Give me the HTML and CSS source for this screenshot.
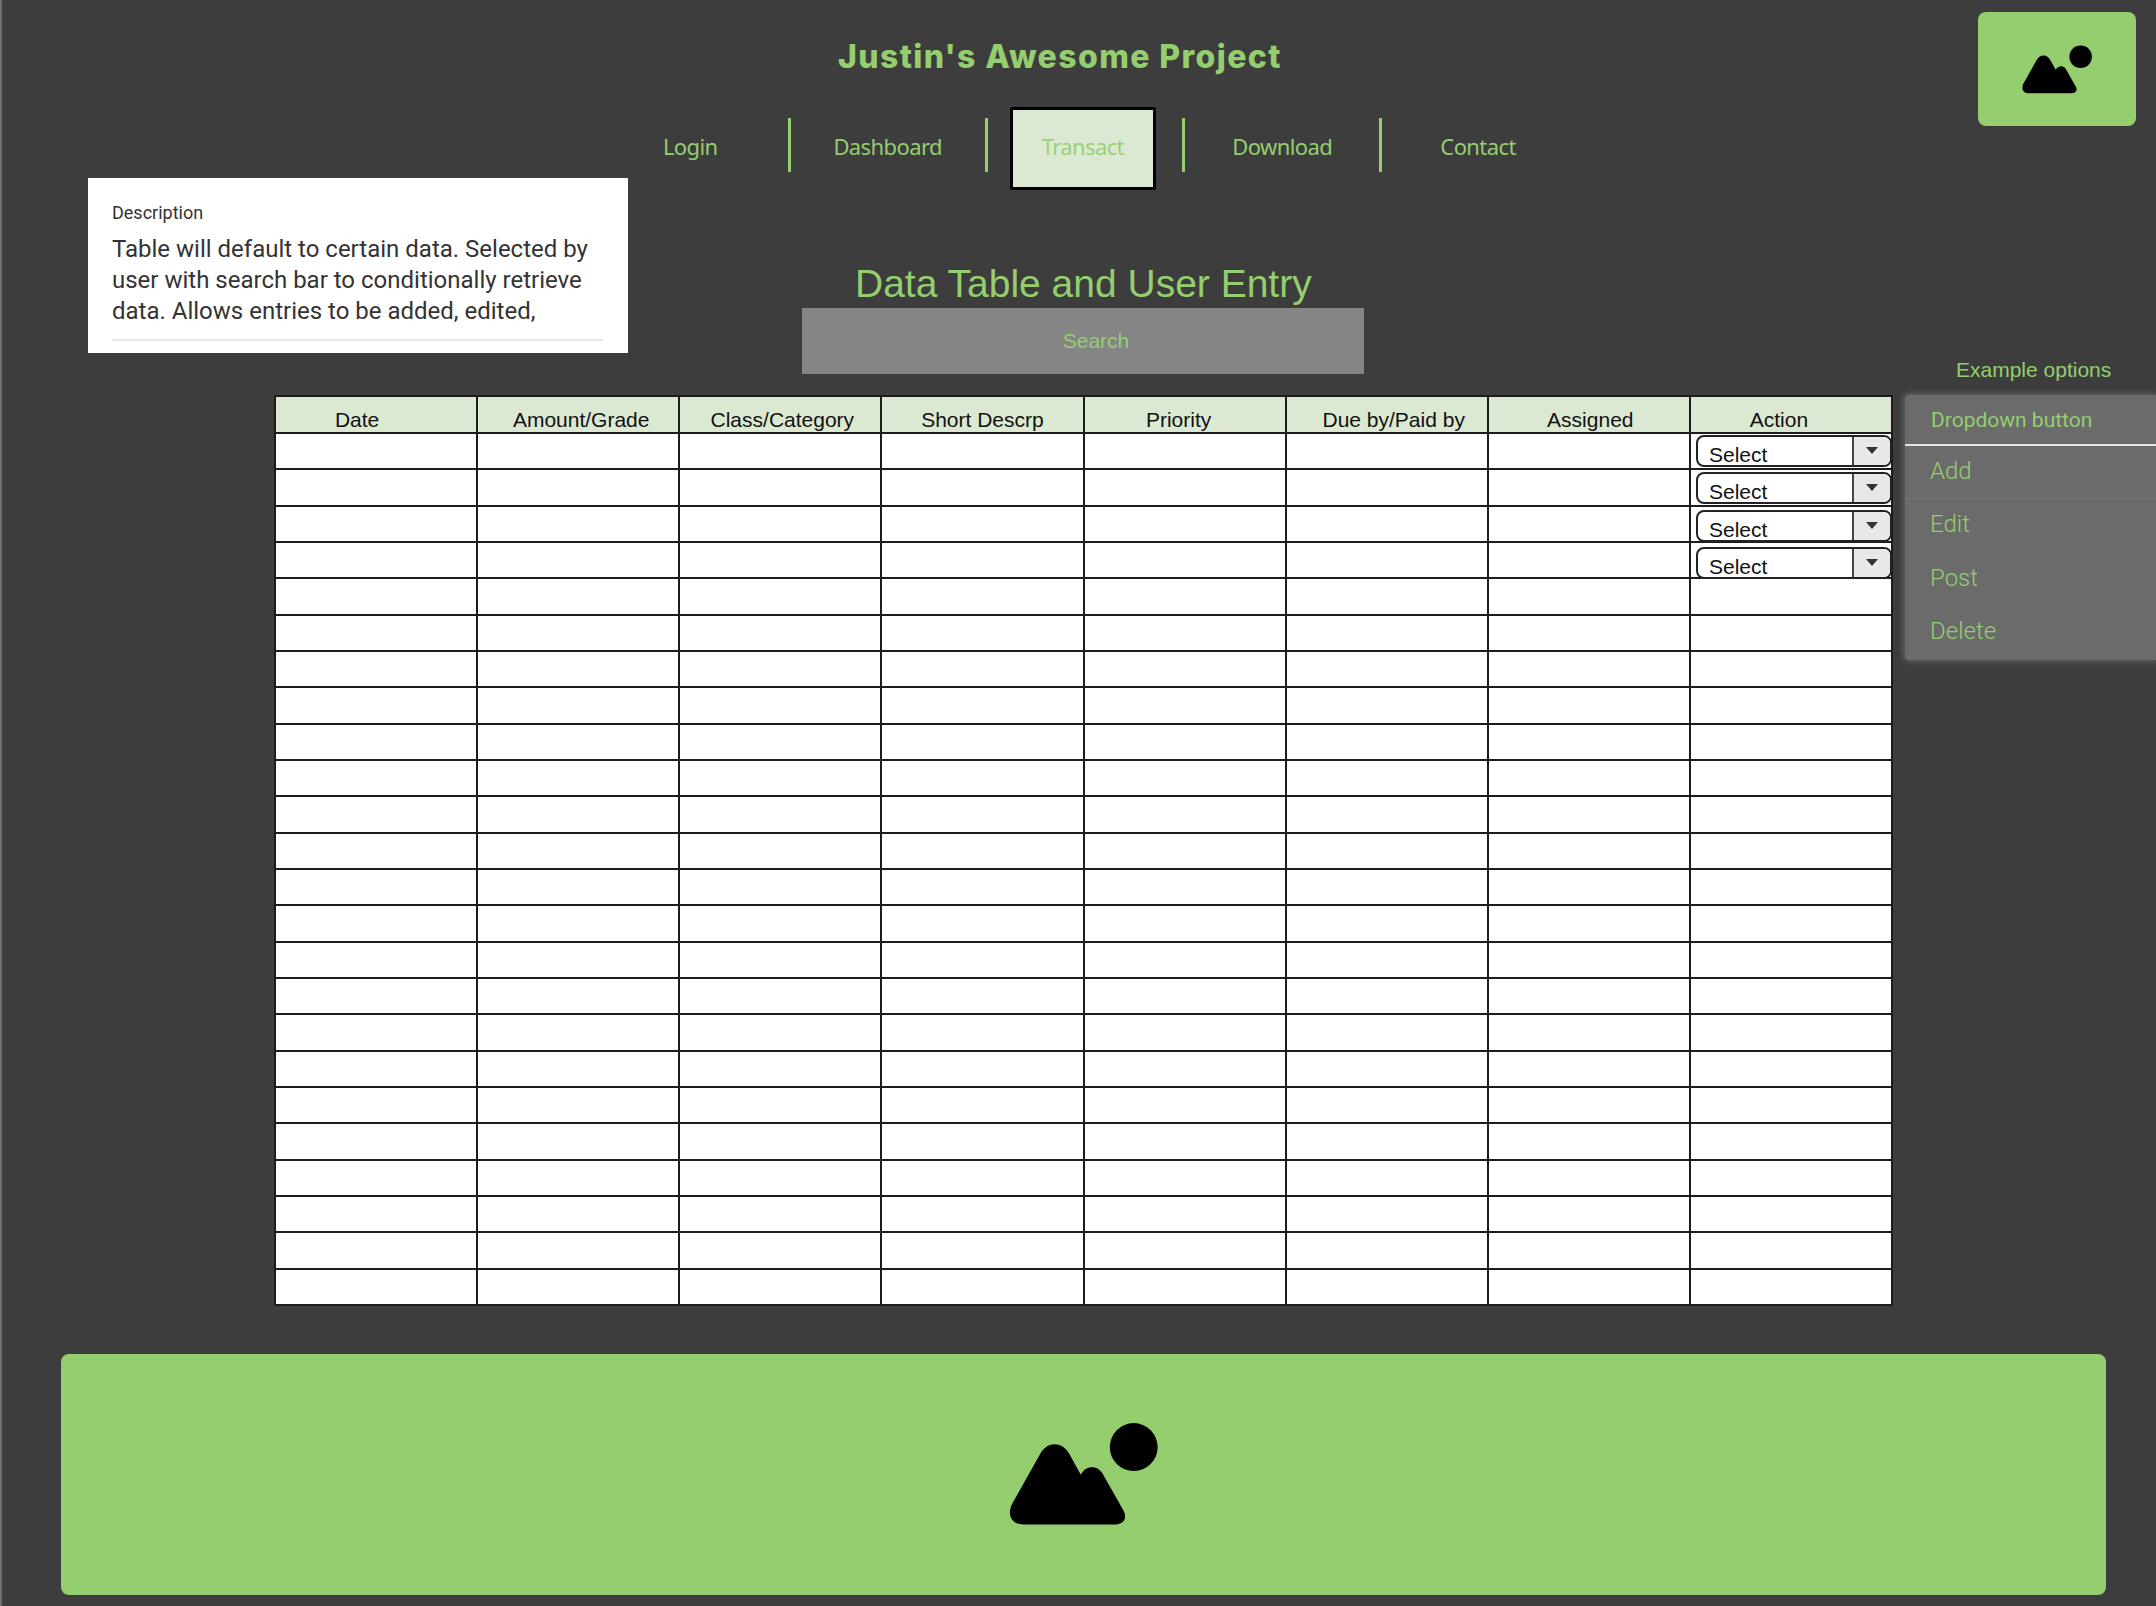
FILE: index.html

```html
<!DOCTYPE html>
<html lang="en">
<head>
    <meta charset="UTF-8">
    <title>Justin's Awesome Project</title>
    <link rel="stylesheet" href="styles.css">
</head>
<body>
    <svg class="defs" width="0" height="0">
        <symbol id="picture" viewBox="140 60 460 312">
            <path d="M190 368C155 368 138 340 156 305L240 155C262 117 305 117 327 155L362 218C372 200 385 196 396 196C410 196 420 203 428 216L488 322C505 350 490 368 462 368Z"/>
            <circle cx="521" cy="135" r="72"/>
        </symbol>
    </svg>

    <div class="top">
        <div class="side">
            <div class="card">
                <div class="card-label">Description</div>
                <p class="card-text">Table will default to certain data. Selected by user with search bar to conditionally retrieve data. Allows entries to be added, edited,</p>
                <div class="card-rule"></div>
            </div>
        </div>

        <div class="center">
            <h1 class="title">Justin's Awesome Project</h1>
            <nav class="nav">
                <a class="nav-item nav-first">Login</a>
                <a class="nav-item">Dashboard</a>
                <div class="nav-item nav-cell"><a class="nav-active">Transact</a></div>
                <a class="nav-item">Download</a>
                <a class="nav-item nav-last">Contact</a>
            </nav>
            <h2 class="heading">Data Table and User Entry</h2>
            <div class="search">Search</div>
        </div>

        <div class="right">
            <div class="logo"><svg class="logo-icon"><use href="#picture"/></svg></div>
            <div class="options-label">Example options</div>
        </div>
    </div>

    <div class="work">
        <div class="table-wrap">
            <table class="grid">
                <thead>
                    <tr>
                        <th>Date</th>
                        <th>Amount/Grade</th>
                        <th>Class/Category</th>
                        <th>Short Descrp</th>
                        <th>Priority</th>
                        <th>Due by/Paid by</th>
                        <th>Assigned</th>
                        <th>Action</th>
                    </tr>
                </thead>
                <tbody id="rows"></tbody>
            </table>
            <div class="selects">
                <div class="select"><span class="select-text">Select</span><span class="select-arrow"></span></div>
                <div class="select"><span class="select-text">Select</span><span class="select-arrow"></span></div>
                <div class="select"><span class="select-text">Select</span><span class="select-arrow"></span></div>
                <div class="select"><span class="select-text">Select</span><span class="select-arrow"></span></div>
            </div>
        </div>

        <div class="menu">
            <div class="menu-head">Dropdown button</div>
            <a class="menu-item menu-hover">Add</a>
            <a class="menu-item">Edit</a>
            <a class="menu-item">Post</a>
            <a class="menu-item">Delete</a>
        </div>
    </div>

    <div class="footer"><svg class="footer-icon"><use href="#picture"/></svg></div>

    <script>
        var rows = document.getElementById('rows');
        for (var i = 0; i < 24; i++) {
            var tr = document.createElement('tr');
            for (var j = 0; j < 8; j++) {
                tr.appendChild(document.createElement('td'));
            }
            rows.appendChild(tr);
        }
    </script>
</body>
</html>
```

FILE: styles.css

```css
body {
    margin: 0;
    height: 1606px;
    overflow: hidden;
    background-color: #3d3d3d;
    border-left: 2px solid #6e6e6e;
    font-family: "Liberation Sans", Arial, sans-serif;
    color: #94ce6f;
}
.defs {
    display: block;
}
.top {
    display: flex;
    height: 395px;
}
.side {
    width: 540px;
    padding: 178px 0 0 86px;
}
.card {
    height: 175px;
    box-sizing: border-box;
    padding: 24px 25px 0 24px;
    background: #fff;
    color: #333;
    font-family: Roboto, sans-serif;
}
.card-label {
    font-size: 18px;
    line-height: 22px;
}
.card-text {
    margin: 10px 0 0;
    font-size: 24px;
    line-height: 31px;
}
.card-rule {
    height: 2px;
    margin-top: 12px;
    background: #e8e8e8;
}
.center {
    width: 1277px;
}
.title {
    margin: 37px 0 0 210px;
    font-family: Inter, sans-serif;
    font-size: 32px;
    font-weight: 800;
    letter-spacing: 1.4px;
    line-height: 40px;
}
.nav {
    display: flex;
    height: 72px;
    padding-top: 11px;
    margin-top: 30px;
}
.nav-item {
    box-sizing: border-box;
    width: 197.3px;
    height: 54px;
    border-right: 3px solid #94ce6f;
    font-family: "Noto Sans", sans-serif;
    font-size: 22px;
    letter-spacing: -0.6px;
    line-height: 56px;
    text-align: center;
}
.nav-first {
    width: 162.5px;
    padding-right: 35px;
}
.nav-cell {
    padding-left: 22px;
}
.nav-active {
    display: block;
    box-sizing: border-box;
    width: 146px;
    height: 83px;
    margin-top: -11px;
    border: 3px solid #000;
    border-radius: 2px;
    background: #dce9d2;
    color: #9ad07a;
    line-height: 72px;
}
.nav-last {
    border-right: 0;
    padding-right: 6px;
}
.heading {
    margin: 69px 0 0 227px;
    font-size: 39px;
    font-weight: normal;
    line-height: 49px;
}
.search {
    width: 562px;
    height: 66px;
    margin-left: 174px;
    background: #858585;
    font-size: 21px;
    line-height: 66px;
    text-align: center;
    text-indent: 26px;
}
.right {
    flex: 1;
}
.logo {
    display: flex;
    align-items: center;
    justify-content: center;
    width: 158px;
    height: 114px;
    margin: 12px 0 0 73px;
    border-radius: 8px;
    background: #94ce6f;
}
.logo-icon {
    width: 72px;
    height: 49px;
}
.options-label {
    margin: 232px 0 0 51px;
    font-size: 21px;
    line-height: 24px;
}
.work {
    display: flex;
    gap: 12px;
    padding-left: 272px;
}
.table-wrap {
    position: relative;
    width: 1619px;
}
.grid {
    width: 1619px;
    border-collapse: collapse;
    table-layout: fixed;
    background: #fff;
}
.grid th, .grid td {
    box-sizing: border-box;
    height: 36.33px;
    padding: 0;
    border: 2px solid #1c1c1c;
}
.grid th {
    padding-top: 11px;
    background: #dce9d2;
    color: #111;
    font-size: 21px;
    font-weight: normal;
    line-height: 24px;
}
.grid th:nth-child(1) { padding-right: 38px; }
.grid th:nth-child(2) { padding-left: 6px; }
.grid th:nth-child(3) { padding-left: 4px; }
.grid th:nth-child(5) { padding-right: 12px; }
.grid th:nth-child(6) { padding-left: 14px; }
.grid th:nth-child(7) { padding-left: 3px; }
.grid th:nth-child(8) { padding-right: 24px; }
.selects {
    position: absolute;
    top: 40px;
    right: 1px;
    display: flex;
    flex-direction: column;
    gap: 5.4px;
    width: 196px;
}
.select {
    display: flex;
    box-sizing: border-box;
    height: 32px;
    border: 2px solid #222;
    border-radius: 8px;
    background: #fff;
    overflow: hidden;
}
.select-text {
    flex: 1;
    padding: 6px 0 0 11px;
    color: #111;
    font-size: 21px;
    line-height: 24px;
}
.select-arrow {
    position: relative;
    width: 36px;
    border-left: 2px solid #444;
    background: #e8e8e8;
}
.select-arrow:after {
    content: "";
    position: absolute;
    top: 10px;
    left: 12px;
    border-left: 6px solid transparent;
    border-right: 6px solid transparent;
    border-top: 7px solid #333;
}
.menu {
    flex: 1;
    height: 265px;
    border-radius: 4px 0 0 4px;
    background: #6b6b6b;
    box-shadow: 0 0 6px 1px rgba(120, 120, 120, 0.8);
}
.menu-head {
    height: 49px;
    padding-left: 26px;
    border-bottom: 2px solid #e4e4e4;
    font-family: Roboto, sans-serif;
    font-size: 21px;
    line-height: 50px;
}
.menu-item {
    display: block;
    height: 53.5px;
    padding-left: 25px;
    font-family: Roboto, sans-serif;
    font-size: 24px;
    font-weight: 300;
    line-height: 50px;
}
.menu-hover {
    height: 52px;
    border-bottom: 1px solid #747474;
}
.footer {
    display: flex;
    align-items: center;
    justify-content: center;
    width: 2045px;
    height: 241px;
    margin: 48px 0 0 59px;
    border-radius: 8px;
    background: #94ce6f;
}
.footer-icon {
    width: 153px;
    height: 104px;
}
```
